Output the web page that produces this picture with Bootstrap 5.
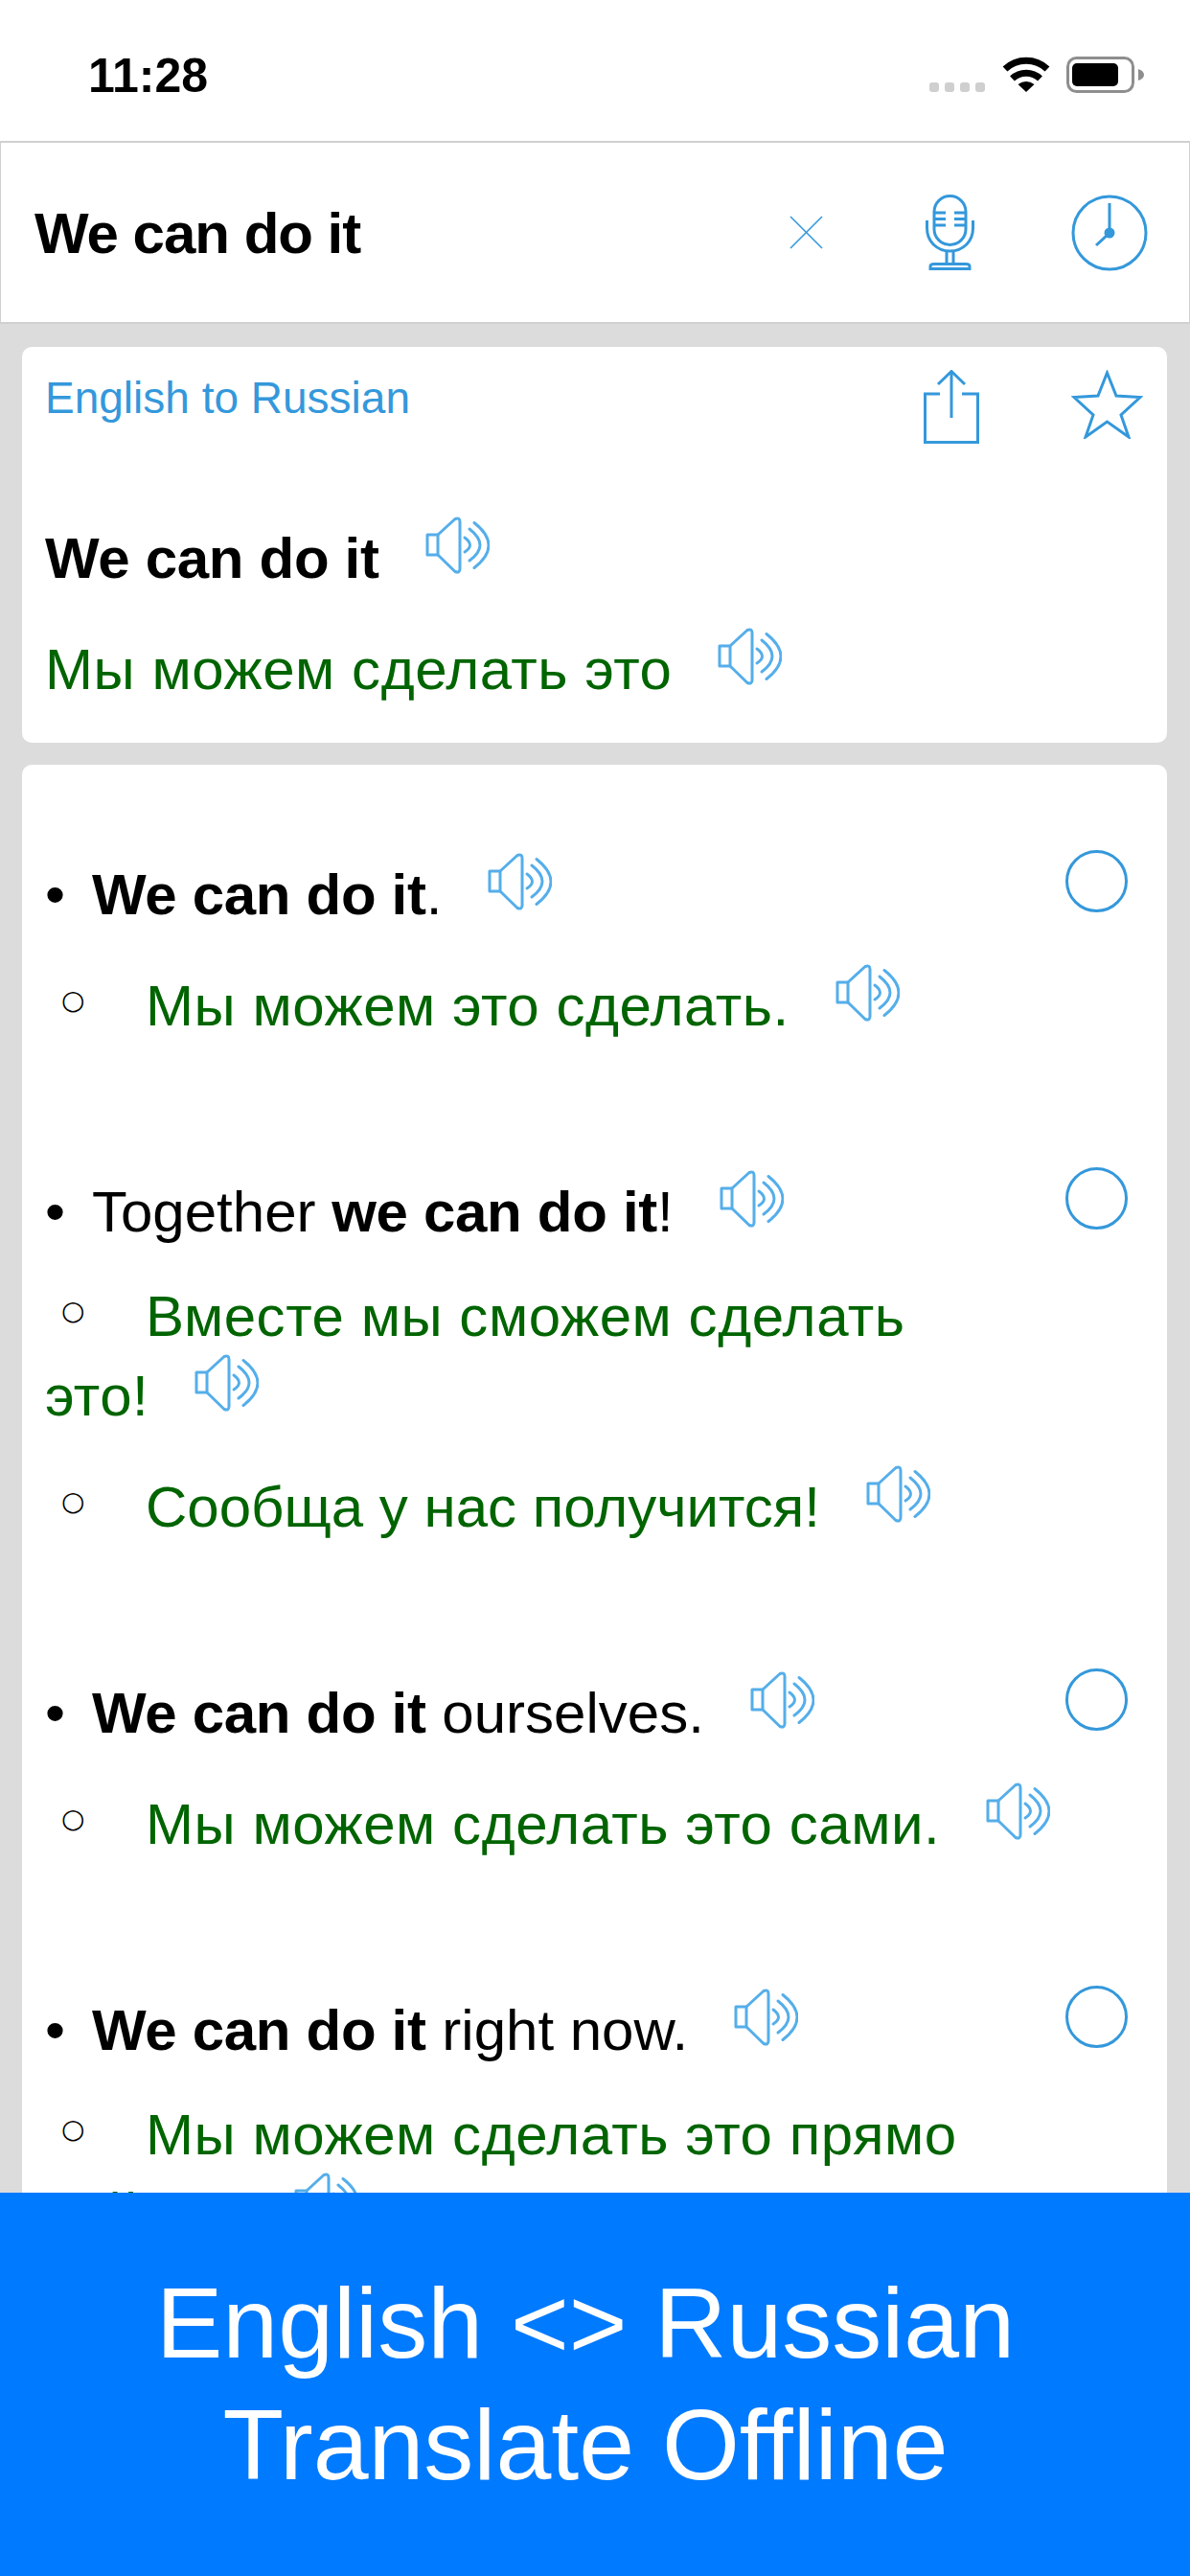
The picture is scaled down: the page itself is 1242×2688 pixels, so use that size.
<!DOCTYPE html>
<html lang="en">
<head>
    <meta charset="UTF-8">
    <title>English Russian Translate Offline</title>
    <link href="https://cdn.jsdelivr.net/npm/bootstrap@5.3.3/dist/css/bootstrap.min.css" rel="stylesheet">
    <style>
        body { font-family: "Liberation Sans", Arial, sans-serif; font-size: 60px; line-height: 76px; color: #000; background: #dcdcdc; }
        b, .fw-bold { letter-spacing: -.3px; }
        .status-bar { height: 147px; padding: 0 48px 0 92px; }
        .clock-text { font-size: 50px; line-height: 56px; font-weight: 700; margin-top: 51px; }
        .status-icons { margin-top: 59px; }
        .signal-dot { width: 10px; height: 10px; margin-top: 27px; margin-right: 6px; background: #cfcfcf; border-radius: 3px; }
        .wifi-icon { margin-left: 12px; margin-right: 17px; }
        .search-bar { height: 191px; padding: 0 43px 0 35px; border: 2px solid #d0d0d0; border-right-width: 1px; border-left-width: 1px; }
        .search-text { margin-top: 2px; letter-spacing: -1px !important; }
        .ico-mic { margin-left: 107px; }
        .ico-clock { margin-left: 101px; }
        .ico-star { margin-left: 96px; }
        .pane-area { padding: 24px 24px 0 23px; }
        .pane { border-radius: 10px; padding: 0 24px; }
        .pane-head { padding: 24px 1px 0 0; height: 101px; }
        .pane-title { font-size: 46px; line-height: 55px; margin-top: 2px; color: #3498db; }
        .first-pane { height: 413px; margin-bottom: 23px; }
        .phrase { margin-top: 75px; }
        .line-gap { margin-top: 33px; }
        .green-text { color: #006400; letter-spacing: .55px; }
        .green-text.tight-text { letter-spacing: 0; }
        .sentence-list { padding-top: 91px; }
        .sentence { margin-bottom: 132px; }
        .sentence-line { padding-right: 17px; }
        .sentence p { margin: 33px 0 0; padding-right: 60px; }
        .dot-solid { display: inline-block; width: 49px; }
        .dot-ring { display: inline-block; width: 105px; padding-left: 17px; color: #000; letter-spacing: 0; font-family: "DejaVu Sans", sans-serif; font-size: 28px; vertical-align: 17px; line-height: 30px; }
        .speaker { width: 67px; height: 60px; margin: 1px 0 0 48px; vertical-align: 4px; }
        .pick-ring { width: 65px; height: 65px; margin-top: -2px; border: 3px solid #3498db; border-radius: 50%; }
        .promo { height: 400px; padding: 73px 20px 0 0; background: #007aff; font-size: 104px; line-height: 127px; }
        svg.line-icon { fill: none; stroke: #3498db; stroke-width: 3; }
    </style>
</head>
<body class="d-flex flex-column vh-100 overflow-hidden">
    <svg width="0" height="0" class="position-absolute">
        <symbol id="ico-speaker" viewBox="0 0 67 60">
            <g fill="none" stroke="#55aeea" stroke-width="3" stroke-linecap="round" stroke-linejoin="round">
                <path d="M13 19H2v21h11z"/>
                <path d="M13 19 31 2.500q5-2 5 3V54.500q0 5-5 3L13 40"/>
                <path d="M41 22q11 8 0 15"/>
                <path d="M46 13q22 17 0 33"/>
                <path d="M51 6.500q30 23.500 0 47"/>
            </g>
        </symbol>
    </svg>

    <!-- Barra de estado -->
    <div class="status-bar bg-white d-flex justify-content-between flex-shrink-0">
        <div class="clock-text">11:28</div>
        <div class="status-icons d-flex align-items-start">
            <span class="signal-dot"></span><span class="signal-dot"></span><span class="signal-dot"></span><span class="signal-dot"></span>
            <svg class="wifi-icon" width="50" height="38" viewBox="0 0 50 38">
                <path d="M3 13A32 32 0 0 1 47 13" fill="none" stroke="#000" stroke-width="7"/>
                <path d="M10.500 23A21 21 0 0 1 39.500 23" fill="none" stroke="#000" stroke-width="7"/>
                <path d="M25 37 16.500 29Q25 23 33.500 29Z"/>
            </svg>
            <svg width="81" height="38" viewBox="0 0 81 38">
                <rect x="1.500" y="1.500" width="68" height="35" rx="9" fill="none" stroke="#8e8e8e" stroke-width="3"/>
                <rect x="6" y="7" width="48" height="24" rx="5"/>
                <path d="M75 13q6 2 6 6t-6 6z" fill="#8e8e8e"/>
            </svg>
        </div>
    </div>

    <!-- Busqueda -->
    <div class="search-bar bg-white d-flex align-items-center flex-shrink-0">
        <div class="search-text fw-bold flex-grow-1">We can do it</div>
        <svg class="line-icon" width="35" height="35" viewBox="0 0 35 35" style="stroke-width:1.500">
            <path d="M1 1 34 34M34 1 1 34"/>
        </svg>
        <svg class="line-icon ico-mic" width="51" height="79" viewBox="0 0 51 79">
            <rect x="9" y="1.500" width="33" height="51" rx="16.500"/>
            <path d="M10 19H21M30 19H41M10 25.500H21M30 25.500H41M10 32H21M30 32H41"/>
            <path d="M1.500 27V35C1.500 49 12 59 25.500 59S49.500 49 49.500 35V27"/>
            <path d="M22 59V72M29 59V72"/>
            <path d="M5 77.500V75Q5 72.500 9 72.500H42Q46 72.500 46 75V77.500Z"/>
        </svg>
        <svg class="line-icon ico-clock" width="80" height="80" viewBox="0 0 80 80">
            <circle cx="40" cy="40" r="38"/>
            <path d="M40 9V40L26 53"/>
            <circle cx="40" cy="40" r="4" fill="#3498db"/>
        </svg>
    </div>

    <!-- Resultados -->
    <div class="pane-area flex-grow-1 overflow-hidden">
        <div class="pane first-pane bg-white">
            <div class="pane-head d-flex align-items-start">
                <div class="pane-title flex-grow-1">English to Russian</div>
                <svg class="line-icon" width="58" height="77" viewBox="0 0 58 77">
                    <path d="M17 25H1.500V75.500H56.500V25H40"/>
                    <path d="M29 50V2M15 15 29 1.500 43 15"/>
                </svg>
                <svg class="line-icon ico-star" width="75" height="72" viewBox="0 0 75 72">
                    <path d="M37.500 3 47 27 72 28.500 52 47 60 70 37.500 54 15 70 23 47 3 28.500 28 27Z"/>
                </svg>
            </div>
            <div class="phrase fw-bold">We can do it<svg class="speaker"><use href="#ico-speaker"/></svg></div>
            <div class="line-gap green-text">Мы можем сделать это<svg class="speaker"><use href="#ico-speaker"/></svg></div>
        </div>

        <div class="pane sentence-list bg-white">
            <div class="sentence">
                <div class="sentence-line d-flex justify-content-between">
                    <div><span class="dot-solid">•</span><b>We can do it</b>.<svg class="speaker"><use href="#ico-speaker"/></svg></div>
                    <div class="pick-ring"></div>
                </div>
                <p class="green-text"><span class="dot-ring">○</span>Мы можем это сделать.<svg class="speaker"><use href="#ico-speaker"/></svg></p>
            </div>
            <div class="sentence">
                <div class="sentence-line d-flex justify-content-between">
                    <div><span class="dot-solid">•</span>Together <b>we can do it</b>!<svg class="speaker"><use href="#ico-speaker"/></svg></div>
                    <div class="pick-ring"></div>
                </div>
                <p class="green-text"><span class="dot-ring">○</span>Вместе мы сможем сделать <span class="text-nowrap">это!<svg class="speaker"><use href="#ico-speaker"/></svg></span></p>
                <p class="green-text tight-text"><span class="dot-ring">○</span>Сообща у нас получится!<svg class="speaker"><use href="#ico-speaker"/></svg></p>
            </div>
            <div class="sentence">
                <div class="sentence-line d-flex justify-content-between">
                    <div><span class="dot-solid">•</span><b>We can do it</b> ourselves.<svg class="speaker"><use href="#ico-speaker"/></svg></div>
                    <div class="pick-ring"></div>
                </div>
                <p class="green-text"><span class="dot-ring">○</span>Мы можем сделать это сами.<svg class="speaker"><use href="#ico-speaker"/></svg></p>
            </div>
            <div class="sentence">
                <div class="sentence-line d-flex justify-content-between">
                    <div><span class="dot-solid">•</span><b>We can do it</b> right now.<svg class="speaker"><use href="#ico-speaker"/></svg></div>
                    <div class="pick-ring"></div>
                </div>
                <p class="green-text"><span class="dot-ring">○</span>Мы можем сделать это прямо <span class="text-nowrap">сейчас.<svg class="speaker"><use href="#ico-speaker"/></svg></span></p>
            </div>
        </div>
    </div>

    <!-- Banner -->
    <div class="promo text-white text-center flex-shrink-0">English &lt;&gt; Russian<br>Translate Offline</div>

    <script src="https://cdn.jsdelivr.net/npm/bootstrap@5.3.3/dist/js/bootstrap.bundle.min.js"></script>
</body>
</html>
